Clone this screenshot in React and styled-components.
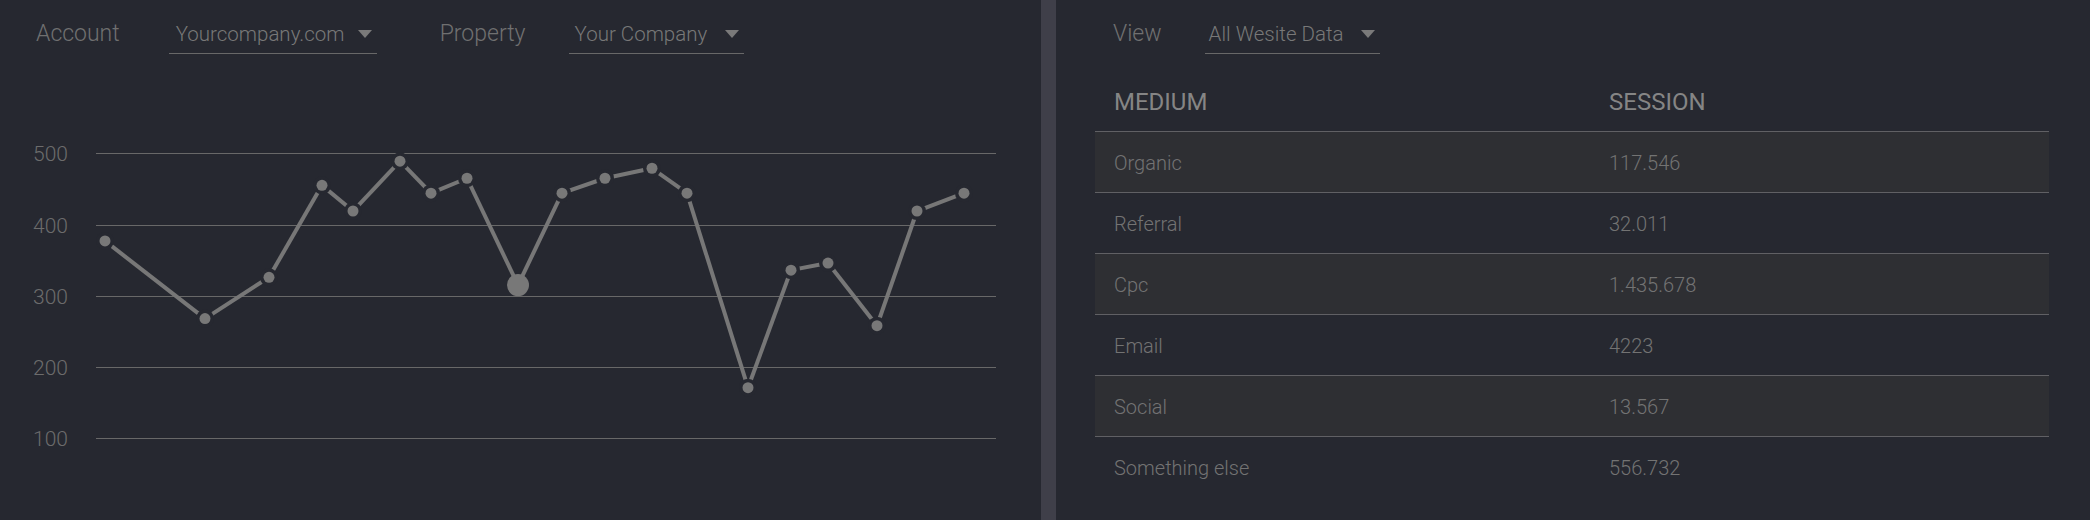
import React from "react";
import styled, { createGlobalStyle } from "styled-components";

const GlobalStyle = createGlobalStyle`
  body {
    margin: 0;
    background: #262830;
    font-family: Roboto, "Noto Sans", sans-serif;
  }
`;

// chart data
const POINTS = [
  [105, 377], [205, 268], [269, 326], [322, 455], [353, 419], [400, 489],
  [431, 444], [467, 465], [518, 315], [562, 444], [605, 465], [652, 479],
  [687, 444], [748, 171], [791, 336], [828, 346], [877, 258], [917, 419],
  [964, 444],
];
const ACTIVE = 8;
const TICKS = [500, 400, 300, 200, 100];
const yOf = (v) => 153.3 + (500 - v) * 0.7125;

const ROWS = [
  ["Organic", "117.546"],
  ["Referral", "32.011"],
  ["Cpc", "1.435.678"],
  ["Email", "4223"],
  ["Social", "13.567"],
  ["Something else", "556.732"],
];

const App = () => {
  return (
    <>
      <GlobalStyle />
      <Page>
        <LeftPanel>
          <Toolbar $indent={36}>
            <Label $gap={49}>Account</Label>
            <Select $width={208} $gap={63} $pad={7}>
              Yourcompany.com
              <Caret />
            </Select>
            <Label $gap={43}>Property</Label>
            <Select $width={175} $pad={6}>
              Your Company
              <Caret />
            </Select>
          </Toolbar>
          <Chart />
        </LeftPanel>
        <Divider />
        <RightPanel>
          <Toolbar $indent={18}>
            <Label $gap={43}>View</Label>
            <Select $width={175} $pad={4}>
              All Wesite Data
              <Caret />
            </Select>
          </Toolbar>
          <Table>
            <HeadRow>
              <HeadCell>MEDIUM</HeadCell>
              <HeadCell>SESSION</HeadCell>
            </HeadRow>
            {ROWS.map(([medium, session], i) => (
              <Row key={medium} $striped={i % 2 === 0} $last={i === ROWS.length - 1}>
                <Cell>{medium}</Cell>
                <Cell>{session}</Cell>
              </Row>
            ))}
          </Table>
        </RightPanel>
      </Page>
    </>
  );
};

const Chart = () => {
  const pts = POINTS.map(([x, v]) => [x, yOf(v)]);
  return (
    <ChartSvg width="1041" height="454" viewBox="0 66 1041 454">
      {TICKS.map((t) => {
        const y = Math.round(yOf(t)) + 0.5;
        return (
          <g key={t}>
            <AxisText x="33" y={y + 7.5}>
              {t}
            </AxisText>
            <line x1="96" x2="996" y1={y} y2={y} stroke="#686868" strokeWidth="1" />
          </g>
        );
      })}
      {pts.slice(1).map(([x, y], i) => (
        <line
          key={"s" + i}
          x1={pts[i][0]}
          y1={pts[i][1]}
          x2={x}
          y2={y}
          stroke="#777777"
          strokeWidth="4"
        />
      ))}
      {pts.map(([x, y], i) =>
        i === ACTIVE ? null : <circle key={"h" + i} cx={x} cy={y} r="9" fill="#262830" />
      )}
      {pts.map(([x, y], i) => (
        <circle key={"d" + i} cx={x} cy={y} r={i === ACTIVE ? 11 : 5.5} fill="#787878" />
      ))}
    </ChartSvg>
  );
};

const Page = styled.div`
  display: flex;
  width: 2090px;
  height: 520px;
  background: #262830;
  overflow: hidden;
`;

const LeftPanel = styled.div`
  width: 1041px;
  flex-shrink: 0;
`;

const Divider = styled.div`
  width: 15px;
  flex-shrink: 0;
  background: #3f3f49;
`;

const RightPanel = styled.div`
  flex: 1;
  padding: 0 41px 0 39px;
`;

const Toolbar = styled.div`
  display: flex;
  align-items: baseline;
  height: 66px;
  box-sizing: border-box;
  padding: 18px 0 0 ${(p) => p.$indent}px;
`;

const Label = styled.span`
  font-size: 23px;
  line-height: 26px;
  font-weight: 300;
  color: #707070;
  margin-right: ${(p) => p.$gap}px;
`;

const Select = styled.div`
  display: flex;
  align-items: center;
  justify-content: space-between;
  box-sizing: border-box;
  width: ${(p) => p.$width}px;
  padding: 4px 5px 7px ${(p) => p.$pad}px;
  margin-right: ${(p) => p.$gap || 0}px;
  border-bottom: 1px solid #686868;
  font-size: 20.5px;
  line-height: 24px;
  font-weight: 300;
  color: #787878;
`;

const Caret = styled.span`
  width: 0;
  height: 0;
  border-left: 7px solid transparent;
  border-right: 7px solid transparent;
  border-top: 8px solid #7a7a7a;
`;

const ChartSvg = styled.svg`
  display: block;
`;

const AxisText = styled.text`
  font-family: Roboto, sans-serif;
  font-size: 21px;
  font-weight: 300;
  fill: #6c6c6c;
`;

const Table = styled.div`
  display: flex;
  flex-direction: column;
`;

const HeadRow = styled.div`
  display: grid;
  grid-template-columns: 495px 1fr;
  height: 66px;
  box-sizing: border-box;
  padding-top: 22px;
  border-bottom: 1px solid #606064;
`;

const HeadCell = styled.div`
  padding-left: 19px;
  font-size: 24px;
  line-height: 28px;
  font-weight: 400;
  color: #858585;
`;

const Row = styled.div`
  display: grid;
  grid-template-columns: 495px 1fr;
  align-items: center;
  height: 61px;
  box-sizing: border-box;
  padding-top: 1px;
  background: ${(p) => (p.$striped ? "#2e2f33" : "transparent")};
  border-bottom: 1px solid ${(p) => (p.$last ? "transparent" : "#606064")};
`;

const Cell = styled.div`
  padding-left: 19px;
  font-size: 20px;
  line-height: 24px;
  font-weight: 300;
  color: #737373;
`;

export default App;
